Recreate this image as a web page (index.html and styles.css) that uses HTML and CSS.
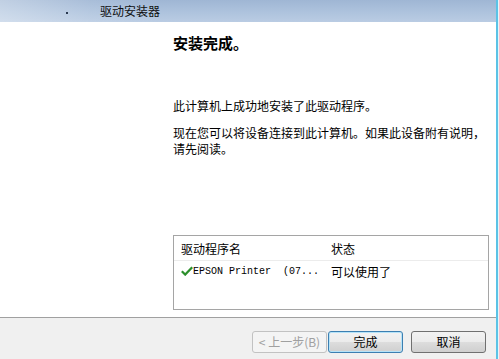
FILE: index.html
```html
<!DOCTYPE html>
<html lang="zh-CN">
<head>
<meta charset="utf-8">
<title>驱动安装器</title>
<link rel="stylesheet" href="styles.css">
</head>
<body>
<div class="window">
  <div class="main">
    <div class="titlebar">
      <span class="dot"></span>
      <span class="title">驱动安装器</span>
    </div>
    <div class="content">
      <h1 class="heading">安装完成。</h1>
      <p class="msg msg-first">此计算机上成功地安装了此驱动程序。</p>
      <p class="msg msg-second">现在您可以将设备连接到此计算机。如果此设备附有说明，<br>请先阅读。</p>
      <div class="listbox">
        <div class="list-head">
          <span class="col col-name">驱动程序名</span>
          <span class="col col-state">状态</span>
        </div>
        <div class="list-row">
          <span class="col col-name">
            <svg class="check" width="12" height="10" viewBox="0 0 12 10"><path d="M0.8 5.2 L4.2 8.6 L11.2 1.2" fill="none" stroke="#2b8f2b" stroke-width="2.2"/></svg>
            <span class="mono">EPSON Printer  (07...</span>
          </span>
          <span class="col col-state">可以使用了</span>
        </div>
      </div>
    </div>
    <div class="footer">
      <button class="btn btn-disabled">&lt; 上一步(B)</button>
      <button class="btn btn-default">完成</button>
      <button class="btn btn-cancel">取消</button>
    </div>
  </div>
  <div class="edge"></div>
</div>
</body>
</html>
```
FILE: styles.css
```css
html, body {
  margin: 0;
  padding: 0;
  background: #ffffff;
}
body {
  width: 499px;
  height: 359px;
  overflow: hidden;
  font-family: "Noto Sans CJK SC", "Liberation Sans", sans-serif;
  font-size: 12px;
  color: #000;
}
.window {
  display: flex;
  width: 499px;
  height: 359px;
}
.main {
  flex: 1;
  display: flex;
  flex-direction: column;
  min-width: 0;
}
.edge {
  width: 3px;
  border-left: 2px solid #5cc3e6;
  background: #e6f6fc;
  box-sizing: border-box;
}
.titlebar {
  height: 22px;
  display: flex;
  align-items: center;
  background: linear-gradient(90deg, rgba(255,255,255,0.35) 0px, rgba(255,255,255,0.1) 90px, rgba(255,255,255,0) 160px),
              linear-gradient(180deg, #9fb6d4 0%, #afc4de 60%, #bacce3 100%);
}
.dot {
  width: 2px;
  height: 2px;
  background: #2a3a50;
  margin-left: 66px;
  margin-top: 4px;
}
.title {
  margin-left: 32px;
  font-size: 12px;
  line-height: 14px;
  color: #101010;
}
.content {
  flex: 1;
  background: #fff;
  padding-left: 173px;
  padding-top: 11px;
  padding-right: 10px;
  border-bottom: 1px solid #a0a0a0;
}
.heading {
  margin: 0;
  font-size: 15px;
  line-height: 19px;
  font-weight: bold;
}
.msg {
  margin: 0;
  font-size: 12px;
  line-height: 14px;
  white-space: nowrap;
}
.msg-first {
  margin-top: 47px;
}
.msg-second {
  margin-top: 12px;
  line-height: 16px;
}
.listbox {
  margin-top: 78px;
  width: 316px;
  height: 75px;
  box-sizing: border-box;
  border: 1px solid #a5a5a5;
}
.list-head {
  display: flex;
  height: 23px;
  align-items: center;
  border-bottom: 1px solid #ececec;
  padding-top: 1px;
}
.list-row {
  display: flex;
  height: 20px;
  align-items: center;
}
.col {
  display: flex;
  align-items: center;
}
.col-name {
  width: 150px;
  padding-left: 7px;
}
.col-state {
  padding-left: 0;
}
.check {
  flex: none;
}
.mono {
  font-family: "Liberation Mono", monospace;
  font-size: 10px;
  white-space: pre;
}
.footer {
  height: 41px;
  background: #f0f0f0;
  display: flex;
  align-items: flex-start;
  padding-top: 13px;
  padding-left: 252px;
  box-sizing: border-box;
}
.btn {
  width: 75px;
  height: 22px;
  padding: 0;
  font-family: "Noto Sans CJK SC", "Liberation Sans", sans-serif;
  font-size: 12px;
  line-height: 18px;
  border-radius: 3px;
  box-sizing: border-box;
  white-space: pre;
}
.btn-disabled {
  border: 1px solid #c2c2c2;
  background: #f4f4f4;
  color: #a0a0a0;
}
.btn-default {
  margin-left: 1px;
  border: 1px solid #3c7fb1;
  box-shadow: inset 0 0 0 1px #b6e3f8;
  background: linear-gradient(180deg, #f2f2f2 0%, #ebebeb 50%, #dddddd 51%, #cfcfcf 100%);
  color: #000;
}
.btn-cancel {
  margin-left: 8px;
  border: 1px solid #707070;
  background: linear-gradient(180deg, #f2f2f2 0%, #ebebeb 50%, #dddddd 51%, #cfcfcf 100%);
  color: #000;
}
```
